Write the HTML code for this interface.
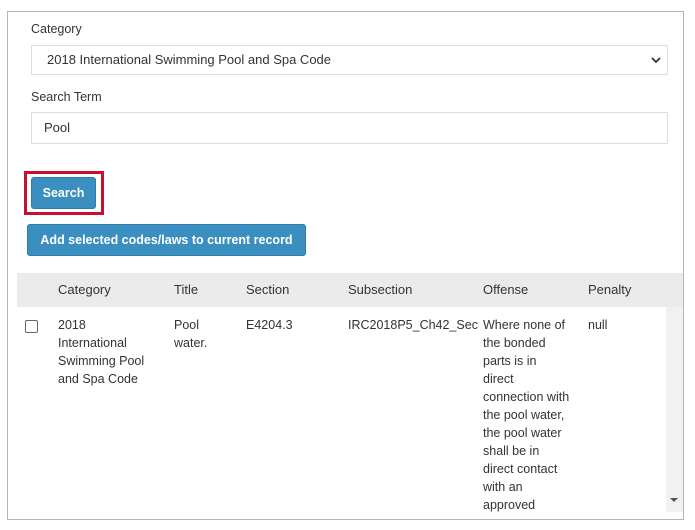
<!DOCTYPE html>
<html><head><style>
*{box-sizing:border-box;margin:0;padding:0}
body{width:695px;height:530px;background:#fff;font-family:"Liberation Sans",sans-serif;font-size:12.5px;color:#333;position:relative;overflow:hidden}
.a{position:absolute}
.frame{left:7px;top:11px;width:677px;height:509px;border:1px solid #b5b5b5}
.box{border:1px solid #ddd;background:#fff}
.btn{background:#3a8ec0;border:1px solid #2f7bab;border-radius:3px;color:#fff;font-weight:bold;font-size:12.5px;text-align:center}
.th{top:282px;font-size:13px}
.td{top:316px;line-height:18px;font-size:12.5px}
</style></head><body>
<div class="a frame"></div>
<div class="a" style="left:31px;top:22px">Category</div>
<div class="a box" style="left:31px;top:45px;width:637px;height:30px"></div>
<div class="a" style="left:47px;top:52px;font-size:13px">2018 International Swimming Pool and Spa Code</div>
<svg class="a" style="left:650px;top:54px" width="12" height="12" viewBox="0 0 12 12"><path d="M2 4l4 4 4-4" fill="none" stroke="#333" stroke-width="1.8"/></svg>
<div class="a" style="left:31px;top:90px">Search Term</div>
<div class="a box" style="left:31px;top:112px;width:637px;height:32px"></div>
<div class="a" style="left:44px;top:120px;font-size:13px">Pool</div>
<div class="a" style="left:24px;top:171px;width:80px;height:44px;border:3px solid #c8102e"></div>
<div class="a btn" style="left:31px;top:177px;width:65px;height:32px;line-height:30px">Search</div>
<div class="a btn" style="left:27px;top:224px;width:279px;height:32px;line-height:30px">Add selected codes/laws to current record</div>
<div class="a" style="left:17px;top:273px;width:666px;height:34px;background:#ebebeb"></div>
<div class="a th" style="left:58px">Category</div>
<div class="a th" style="left:174px">Title</div>
<div class="a th" style="left:246px">Section</div>
<div class="a th" style="left:348px">Subsection</div>
<div class="a th" style="left:483px">Offense</div>
<div class="a th" style="left:588px">Penalty</div>
<div class="a" style="left:25px;top:320px;width:13px;height:13px;border:1px solid #666;border-radius:2px"></div>
<div class="a td" style="left:58px">2018<br>International<br>Swimming Pool<br>and Spa Code</div>
<div class="a td" style="left:174px">Pool<br>water.</div>
<div class="a td" style="left:246px">E4204.3</div>
<div class="a td" style="left:348px">IRC2018P5_Ch42_SecE4</div>
<div class="a td" style="left:479px;width:104px;background:#fff;padding-left:4px">Where none of<br>the bonded<br>parts is in<br>direct<br>connection with<br>the pool water,<br>the pool water<br>shall be in<br>direct contact<br>with an<br>approved</div>
<div class="a td" style="left:588px">null</div>
<div class="a" style="left:666px;top:307px;width:17px;height:205px;background:#f1f1f1"></div>
<svg class="a" style="left:670px;top:497px" width="8" height="6"><path d="M0 1h8L4 5z" fill="#555"/></svg>
</body></html>
